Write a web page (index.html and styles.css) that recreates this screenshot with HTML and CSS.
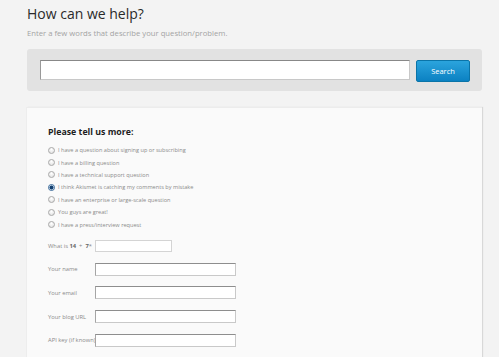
FILE: index.html
```html
<!DOCTYPE html>
<html>
<head>
<meta charset="utf-8">
<link rel="stylesheet" href="styles.css">
</head>
<body>
<div class="page">
  <h1 class="title">How can we help?</h1>
  <p class="sub">Enter a few words that describe your question/problem.</p>
  <div class="search">
    <input class="search-input" type="text">
    <button class="search-btn" type="button">Search</button>
  </div>
  <div class="card">
    <h2 class="card-title">Please tell us more:</h2>
    <ul class="options">
      <li class="opt"><span class="radio"></span>I have a question about signing up or subscribing</li>
      <li class="opt"><span class="radio"></span>I have a billing question</li>
      <li class="opt"><span class="radio"></span>I have a technical support question</li>
      <li class="opt"><span class="radio checked"></span>I think Akismet is catching my comments by mistake</li>
      <li class="opt"><span class="radio"></span>I have an enterprise or large-scale question</li>
      <li class="opt"><span class="radio"></span>You guys are great!</li>
      <li class="opt"><span class="radio"></span>I have a press/interview request</li>
    </ul>
    <div class="fields">
      <div class="row"><label class="lbl">What is <b class="num">14</b> &nbsp;+ &nbsp;<b class="num">7</b>*</label><input class="field short" type="text"></div>
      <div class="row"><label class="lbl">Your name</label><input class="field" type="text"></div>
      <div class="row"><label class="lbl">Your email</label><input class="field" type="text"></div>
      <div class="row"><label class="lbl">Your blog URL</label><input class="field" type="text"></div>
      <div class="row"><label class="lbl">API key (if known)</label><input class="field" type="text"></div>
    </div>
  </div>
</div>
</body>
</html>
```
FILE: styles.css
```css
html, body {
  margin: 0;
  padding: 0;
  background: #f3f3f3;
}
body {
  font-family: "Open Sans", "Liberation Sans", sans-serif;
  color: #333;
}
.page {
  width: 455px;
  padding: 4px 0 0 27px;
}
.title {
  margin: 0;
  font-size: 14px;
  font-weight: 400;
  line-height: 20px;
  color: #2a2a2a;
}
.sub {
  margin: 3px 0 0;
  font-size: 7.7px;
  line-height: 12px;
  color: #a3a3a3;
}
.search {
  margin-top: 10px;
  height: 42px;
  box-sizing: border-box;
  padding: 11px 12px 0 13px;
  background: #e2e2e2;
  border-radius: 3px;
  display: flex;
  gap: 6px;
  align-items: flex-start;
}
.search-input {
  width: 370px;
  height: 20px;
  box-sizing: border-box;
  margin: 0;
  padding: 0 4px;
  border: 1px solid #c8c8c8;
  border-top: 1px solid #888;
  border-left: 1px solid #999;
  background: #fff;
  outline: none;
}
.search-btn {
  width: 54px;
  height: 22px;
  margin: 0;
  padding: 0;
  border: 1px solid #0a74a8;
  border-radius: 2px;
  background: linear-gradient(#2ba4dd, #0b81c2);
  color: #fff;
  font-family: "Open Sans", "Liberation Sans", sans-serif;
  font-size: 7.5px;
  line-height: 20px;
}
.card {
  margin-top: 16px;
  height: 260px;
  box-sizing: border-box;
  padding: 16px 21px 0;
  background: #fafafa;
  border-top: 1px solid #ececec;
  box-shadow: 1px 0 1px #d8d8d8, -1px 0 0 #ededed;
}
.card-title {
  margin: 0;
  font-size: 8.8px;
  font-weight: 700;
  line-height: 16px;
  color: #1e1e1e;
}
.options {
  list-style: none;
  margin: 4px 0 0;
  padding: 0;
}
.opt {
  display: flex;
  align-items: center;
  height: 12.4px;
  font-size: 5.6px;
  color: #8a8a8a;
}
.radio {
  width: 5px;
  height: 5px;
  border: 1px solid #a9a9a9;
  border-radius: 50%;
  background: radial-gradient(circle at 50% 30%, #fff, #ddd);
  margin-right: 3px;
  flex: none;
}
.radio.checked {
  border-color: #3a6a9a;
  background: radial-gradient(circle, #123f70 0 1.8px, #dbe7f3 2.2px);
}
.fields {
  margin-top: 3px;
}
.row {
  display: flex;
  align-items: center;
  height: 23.7px;
}
.lbl {
  width: 47px;
  flex: none;
  font-size: 5.8px;
  color: #8a8a8a;
  white-space: nowrap;
}
.num {
  color: #666;
  font-weight: 700;
}
.field {
  width: 141px;
  height: 13px;
  box-sizing: border-box;
  margin: 0;
  padding: 0 2px;
  border: 1px solid #c9c9c9;
  border-top: 1px solid #8e8e8e;
  border-left: 1px solid #a5a5a5;
  background: #fff;
  outline: none;
}
.field.short {
  width: 77px;
  height: 12px;
  border: 1px solid #d4d4d4;
}
```
